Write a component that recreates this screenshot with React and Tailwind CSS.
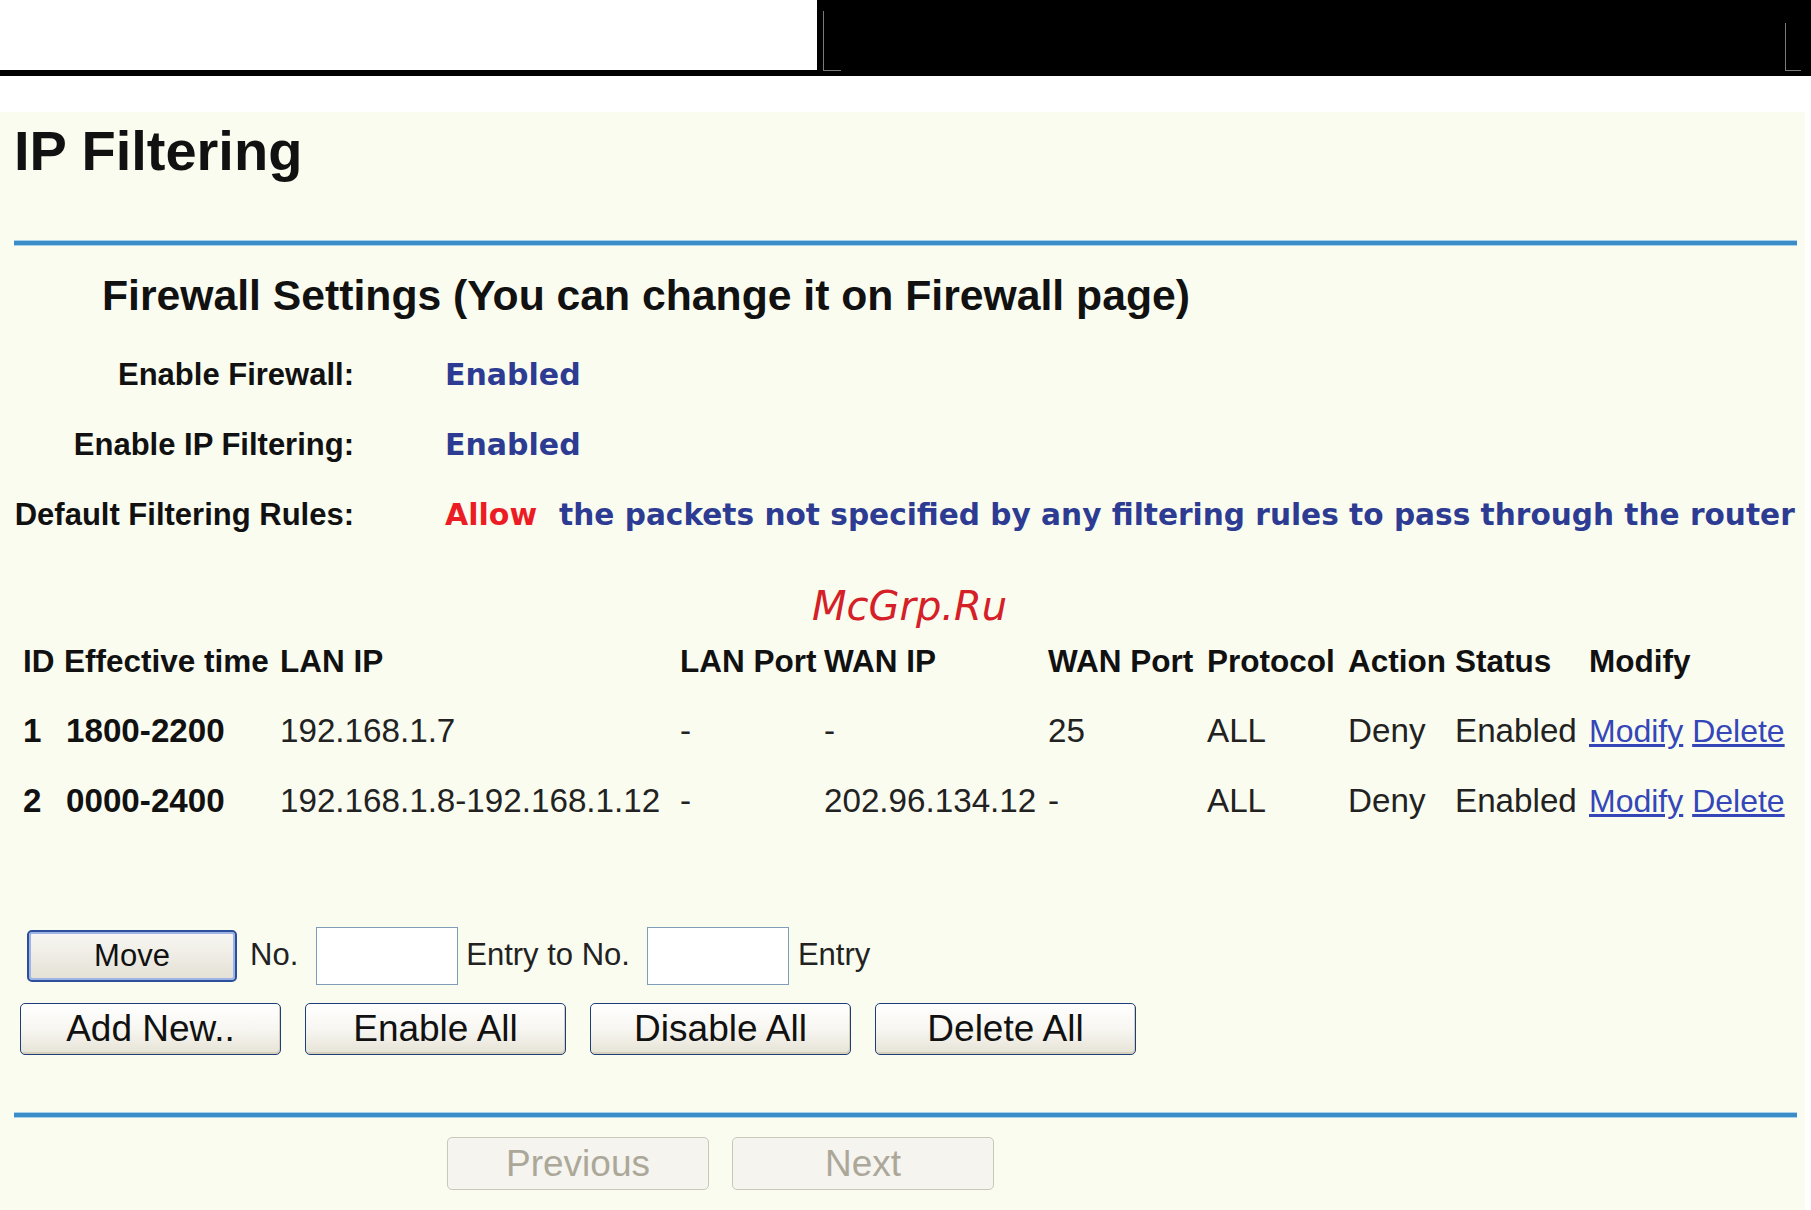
import React from "react"

const arial = "font-['Liberation_Sans',Arial,sans-serif]"
const verdana = "font-['DejaVu_Sans',Verdana,sans-serif]"

const rules = [
  { id: "1", time: "1800-2200", lanIp: "192.168.1.7", lanPort: "-", wanIp: "-", wanPort: "25", proto: "ALL", action: "Deny", status: "Enabled" },
  { id: "2", time: "0000-2400", lanIp: "192.168.1.8-192.168.1.12", lanPort: "-", wanIp: "202.96.134.12", wanPort: "-", proto: "ALL", action: "Deny", status: "Enabled" },
]

const cols = "grid grid-cols-[41px_216px_400px_144px_224px_159px_141px_107px_134px_1fr] pl-[23px] whitespace-nowrap"

function XpButton({ children, className = "" }) {
  return (
    <button className={`h-[52px] w-[261px] rounded-[5px] border border-[#1d3e7a] bg-gradient-to-b from-white via-[#f7f6f1] to-[#e6e3d6] shadow-[inset_-1px_-2px_0_#d5cfbb] text-[37px] leading-none text-[#111] ${arial} ${className}`}>
      {children}
    </button>
  )
}

function SettingRow({ label, children }) {
  return (
    <div className="flex items-baseline h-[70px] leading-[70px]">
      <div className={`w-[354px] text-right text-[31px] font-bold text-[#111] ${arial}`}>{label}</div>
      <div className={`ml-[91px] font-bold whitespace-nowrap ${verdana}`}>{children}</div>
    </div>
  )
}

export default function App() {
  return (
    <div className="min-h-screen w-[1811px] bg-white">
      {/* top strip */}
      <div className="flex h-[76px]">
        <div className="flex w-[817px] flex-col">
          <div className="h-[70px] bg-white" />
          <div className="h-[6px] bg-black" />
        </div>
        <div className="flex flex-1 items-end bg-black pb-[5px]">
          <div className="ml-[6px] h-[60px] w-[18px] border-b border-l border-[#7a7a7a]" />
          <div className="ml-auto mr-[10px] h-[48px] w-[16px] border-b border-l border-[#7a7a7a]" />
        </div>
      </div>

      <div className="h-[36px]" />

      <div className="mr-[6px] min-h-[1098px] bg-[#fafcf0] pt-[11px]">
        <h1 className={`pl-[14px] text-[56px] font-bold leading-none text-[#111] ${arial}`}>IP Filtering</h1>

        <div className="ml-[14px] mr-[8px] mt-[61px] h-[6px] border-y border-[#a9d1ea] bg-[#3a8dc9]" />

        <h2 className={`mt-[28px] pl-[102px] text-[42.7px] font-bold leading-none text-[#111] ${arial}`}>
          Firewall Settings (You can change it on Firewall page)
        </h2>

        <div className="mt-[23px]">
          <SettingRow label="Enable Firewall:">
            <span className="text-[30px] text-[#2d3c92]">Enabled</span>
          </SettingRow>
          <SettingRow label="Enable IP Filtering:">
            <span className="text-[30px] text-[#2d3c92]">Enabled</span>
          </SettingRow>
          <SettingRow label="Default Filtering Rules:">
            <span className="text-[30px] text-[#ec1c24]">Allow</span>
            <span className="ml-[22px] text-[29.6px] text-[#2d3c92]">
              the packets not specified by any filtering rules to pass through the router
            </span>
          </SettingRow>
        </div>

        {/* watermark */}
        <div className={`mt-[36px] h-[40px] pl-[812px] text-[40px] italic leading-none text-[#d42026] ${verdana}`}>
          McGrp.Ru
        </div>

        {/* rules table */}
        <div className={`mt-[1px] ${arial}`}>
          <div className={`${cols} h-[69px] text-[31.5px] font-bold leading-[69px] text-[#111]`}>
            <div>ID</div>
            <div>Effective time</div>
            <div>LAN IP</div>
            <div>LAN Port</div>
            <div>WAN IP</div>
            <div>WAN Port</div>
            <div>Protocol</div>
            <div>Action</div>
            <div>Status</div>
            <div>Modify</div>
          </div>
          {rules.map((r) => (
            <div key={r.id} className={`${cols} h-[70px] text-[33.2px] leading-[70px] text-[#222]`}>
              <div className="font-bold text-[#111]">{r.id}</div>
              <div className="pl-[2px] font-bold text-[#111]">{r.time}</div>
              <div>{r.lanIp}</div>
              <div>{r.lanPort}</div>
              <div>{r.wanIp}</div>
              <div>{r.wanPort}</div>
              <div>{r.proto}</div>
              <div>{r.action}</div>
              <div>{r.status}</div>
              <div className="text-[32px]">
                <a href="#" className="text-[#3446b8] underline">Modify</a>{" "}
                <a href="#" className="text-[#3446b8] underline">Delete</a>
              </div>
            </div>
          ))}
        </div>

        {/* move row */}
        <div className={`mt-[91px] flex h-[58px] items-center pl-[27px] text-[31px] text-[#222] ${arial}`}>
          <button className="h-[52px] w-[210px] rounded-[5px] border-2 border-[#2b4f9a] bg-gradient-to-b from-[#f8f7f3] to-[#e4e1d5] shadow-[inset_0_0_0_2px_#9fb4e4] text-[31px] leading-none text-[#111]">
            Move
          </button>
          <span className="ml-[13px]">No.</span>
          <input className="ml-[18px] h-[58px] w-[142px] border border-[#7f9db9] bg-white" />
          <span className="ml-[8px]">Entry to No.</span>
          <input className="ml-[17px] h-[58px] w-[142px] border border-[#7f9db9] bg-white" />
          <span className="ml-[9px]">Entry</span>
        </div>

        <div className="mt-[18px] flex gap-[24px] pl-[20px]">
          <XpButton>Add New..</XpButton>
          <XpButton>Enable All</XpButton>
          <XpButton>Disable All</XpButton>
          <XpButton>Delete All</XpButton>
        </div>

        <div className="ml-[14px] mr-[8px] mt-[57px] h-[6px] border-y border-[#a9d1ea] bg-[#3a8dc9]" />

        <div className="mt-[19px] flex gap-[23px] pl-[447px]">
          {["Previous", "Next"].map((t) => (
            <button
              key={t}
              disabled
              className={`h-[53px] w-[262px] rounded-[5px] border border-[#c9c7ba] bg-[#f5f4ef] text-[37px] leading-none text-[#aca899] ${arial}`}
            >
              {t}
            </button>
          ))}
        </div>
      </div>
    </div>
  )
}
